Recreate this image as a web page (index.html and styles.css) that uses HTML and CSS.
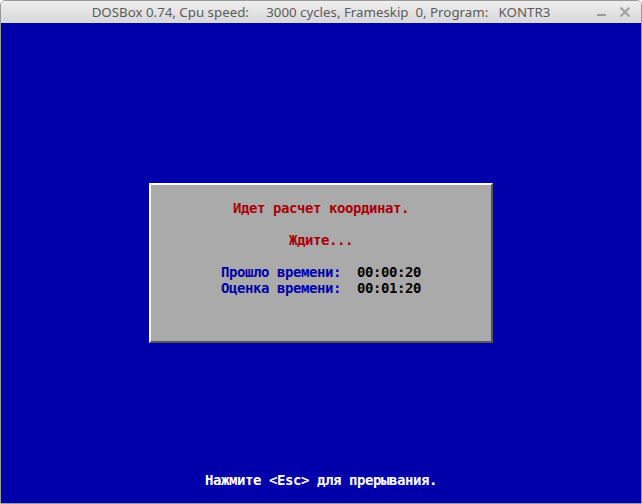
FILE: index.html
```html
<!DOCTYPE html>
<html lang="ru">
<head>
<meta charset="utf-8">
<title>DOSBox</title>
<link rel="stylesheet" href="styles.css">
</head>
<body>
<div class="window">
  <div class="titlebar">
    <span class="spacer"></span>
    <span class="title">DOSBox 0.74, Cpu speed:     3000 cycles, Frameskip  0, Program:   KONTR3</span>
    <div class="controls">
      <svg class="btn-min" width="10" height="4" viewBox="0 0 10 4"><rect x="0" y="1" width="9" height="2" fill="#9b9b9b"/></svg>
      <svg class="btn-close" width="10" height="10" viewBox="0 0 10 10"><path d="M1.2 1.2 L8.8 8.8 M8.8 1.2 L1.2 8.8" stroke="#a3a3a3" stroke-width="2.2" stroke-linecap="round"/></svg>
    </div>
  </div>
  <div class="screen">
    <div class="dialog">
      <p class="line red">Идет расчет координат.</p>
      <p class="line red gap">Ждите...</p>
      <p class="line gap"><span class="blue">Прошло времени:</span>  <span class="black">00:00:20</span></p>
      <p class="line"><span class="blue">Оценка времени:</span>  <span class="black">00:01:20</span></p>
    </div>
    <p class="status">Нажмите &lt;Esc&gt; для прерывания.</p>
  </div>
</div>
</body>
</html>
```
FILE: styles.css
```css
html, body {
  margin: 0;
  padding: 0;
  background: #ffffff;
}

.window {
  box-sizing: border-box;
  width: 642px;
  height: 504px;
  border: 1px solid #9a9a9a;
  border-radius: 5px 5px 0 0;
  overflow: hidden;
  display: flex;
  flex-direction: column;
}

.titlebar {
  height: 22px;
  flex: none;
  background: linear-gradient(#eeeeee, #d8d8d8);
  display: grid;
  grid-template-columns: 1fr auto 1fr;
  align-items: center;
  font-family: "Noto Sans", "DejaVu Sans", sans-serif;
  font-size: 13.3px;
  color: #5c5c5c;
}

.title {
  white-space: pre;
  line-height: 22px;
}

.controls {
  justify-self: end;
  display: flex;
  align-items: center;
  gap: 13px;
  padding-right: 11px;
}

.btn-min {
  display: block;
  margin-top: 6px;
}

.btn-close {
  display: block;
}

.screen {
  width: 640px;
  height: 480px;
  flex: none;
  background: #0000aa;
  padding-top: 160px;
  box-sizing: border-box;
  font-family: "DejaVu Sans Mono", "Liberation Mono", monospace;
  font-weight: bold;
  font-size: 14px;
  letter-spacing: -0.43px;
  line-height: 16px;
}

.dialog {
  box-sizing: border-box;
  width: 344px;
  height: 160px;
  margin: 0 auto;
  background: #aaaaaa;
  border: 2px solid;
  border-color: #ffffff #555555 #555555 #ffffff;
  padding-top: 15px;
}

.line {
  margin: 0;
  white-space: pre;
  text-align: center;
}

.gap {
  margin-top: 16px;
}

.red {
  color: #aa0000;
}

.blue {
  color: #0000aa;
}

.black {
  color: #000000;
}

.status {
  margin: 129px 0 0 0;
  white-space: pre;
  text-align: center;
  color: #ffffff;
}
```
